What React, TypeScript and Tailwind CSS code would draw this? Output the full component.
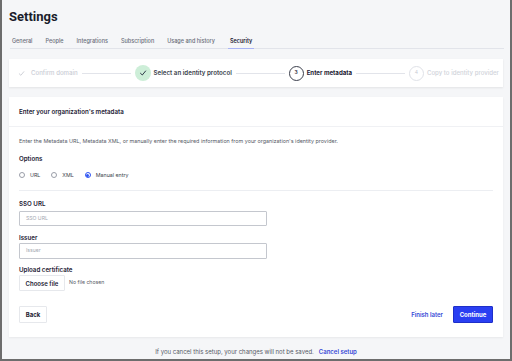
import React from 'react'

const Check = ({ className }: { className?: string }) => (
  <svg viewBox="0 0 10 10" className={className} fill="none" stroke="currentColor" strokeWidth="1" strokeLinecap="round" strokeLinejoin="round">
    <path d="M2.5 5.3 L4.3 7 L7.6 3" />
  </svg>
)

const Line = () => <div className="flex-1 h-px bg-[#e2e4ea] mx-[4px]" />

const Radio = ({ label, checked }: { label: string; checked?: boolean }) => (
  <label className="flex items-center gap-[5px]">
    {checked ? (
      <span className="w-[6px] h-[6px] rounded-full border border-[#2f55f3] bg-white flex items-center justify-center">
        <span className="w-[3px] h-[3px] rounded-full bg-[#2f55f3]" />
      </span>
    ) : (
      <span className="w-[6px] h-[6px] rounded-full border border-[#9a9ea8] bg-white" />
    )}
    <span className="text-[5.3px] leading-[8px] text-[#3b3f4c]">{label}</span>
  </label>
)

const App = () => {
  const tabs = ['General', 'People', 'Integrations', 'Subscription', 'Usage and history', 'Security']
  return (
    <div
      className="w-[512px] h-[361px] bg-[#f5f6f8] border-x-2 border-b-2 border-[#6d6d6d] overflow-hidden flex flex-col text-[#1c2033]"
      style={{ fontFamily: 'Inter, "Noto Sans", sans-serif' }}
    >
      <h1
        className="text-[13px] font-bold leading-none pl-[7px] pt-[10px] text-[#1a1d2b]"
        style={{ fontFamily: 'Roboto, sans-serif' }}
      >
        Settings
      </h1>

      <div className="ml-[8px] mr-[6px] mt-[14px] flex gap-[13px] border-b border-[#e2e4ea] pl-[2px]">
        {tabs.map((t) => (
          <div
            key={t}
            className={
              t === 'Security'
                ? 'text-[5.5px] leading-[8px] font-semibold text-[#1c2033] pb-[3px] border-b border-[#a9b4f5] -mb-px px-[2px]'
                : 'text-[5.5px] leading-[8px] font-medium text-[#6a6e7a] pb-[3px]'
            }
          >
            {t}
          </div>
        ))}
      </div>

      <div className="mx-[7px] mt-[10px] h-[28px] bg-white shadow-[0_1px_2px_rgba(0,0,0,0.08)] flex items-center pl-[8px] pr-[4px]">
        <Check className="w-[9px] h-[9px] text-[#c9ccd4]" />
        <span className="ml-[5px] text-[6.1px] font-medium text-[#c9ccd4]">Confirm domain</span>
        <Line />
        <span className="w-[16px] h-[16px] rounded-full bg-[#cdeed8] flex items-center justify-center">
          <Check className="w-[10px] h-[10px] text-[#2f3a4a]" />
        </span>
        <span className="ml-[3px] text-[6.2px] font-semibold text-[#3b3f4c]">Select an identity protocol</span>
        <Line />
        <span className="w-[15px] h-[15px] rounded-full border border-[#3b3f4c] flex items-center justify-center text-[5px] font-semibold">
          3
        </span>
        <span className="ml-[3px] text-[6.1px] font-bold text-[#1c2033]">Enter metadata</span>
        <Line />
        <span className="w-[15px] h-[15px] rounded-full border border-[#e0e2e8] flex items-center justify-center text-[5px] text-[#c9ccd4]">
          4
        </span>
        <span className="ml-[3px] text-[6.1px] font-medium text-[#d0d3da]">Copy to identity provider</span>
      </div>

      <div className="mx-[7px] mt-[10px] h-[240px] bg-white shadow-[0_1px_2px_rgba(0,0,0,0.06)] flex flex-col">
        <div className="h-[30px] shrink-0 border-b border-[#f0f1f4] flex items-center px-[10px]">
          <span className="text-[6.2px] font-semibold text-[#1c2033]">Enter your organization's metadata</span>
        </div>
        <div className="px-[10px] flex flex-col flex-1">
          <p className="mt-[10px] text-[5.4px] leading-[8px] text-[#555a66]">
            Enter the Metadata URL, Metadata XML, or manually enter the required information from your organization's identity provider.
          </p>
          <p className="mt-[9px] text-[6.2px] leading-[9px] font-semibold text-[#1c2033]">Options</p>
          <div className="mt-[8px] h-[8px] flex items-center gap-[11px]">
            <Radio label="URL" />
            <Radio label="XML" />
            <Radio label="Manual entry" checked />
          </div>
          <div className="mt-[11px] h-px bg-[#eceef2]" />

          <p className="mt-[8px] text-[6.2px] leading-[9px] font-semibold text-[#1c2033]">SSO URL</p>
          <div className="mt-[3px] w-[248px] h-[15px] border border-[#c4c7ce] rounded-[1px] flex items-center px-[6px] text-[5.1px] text-[#a3a7b0]">
            SSO URL
          </div>
          <p className="mt-[7px] text-[6.2px] leading-[9px] font-semibold text-[#1c2033]">Issuer</p>
          <div className="mt-[1px] w-[248px] h-[16px] border border-[#c4c7ce] rounded-[1px] flex items-center px-[6px] text-[5.1px] text-[#a3a7b0]">
            Issuer
          </div>
          <p className="mt-[6px] text-[6.2px] leading-[9px] font-semibold text-[#1c2033]">Upload certificate</p>
          <div className="mt-[1px] flex items-center gap-[4px]">
            <div className="w-[46px] h-[16px] border border-[#e6e8ec] rounded-[1px] flex items-center justify-center text-[6px] font-semibold text-[#1c2033]">
              Choose file
            </div>
            <span className="text-[5.2px] text-[#555a66]">No file chosen</span>
          </div>

          <div className="mt-[15px] flex items-center">
            <div className="w-[28px] h-[17px] border border-[#e6e8ec] rounded-[1px] flex items-center justify-center text-[6px] font-bold text-[#1c2033]">
              Back
            </div>
            <div className="flex-1" />
            <span className="text-[6px] font-semibold text-[#3548d6] mr-[10px]">Finish later</span>
            <div className="w-[40px] h-[17px] bg-[#2a3ff2] border border-[#1e2fc9] rounded-[1px] flex items-center justify-center text-[6px] font-bold text-white">
              Continue
            </div>
          </div>
        </div>
      </div>

      <div className="mt-[10px] flex justify-center gap-[5px] text-[6px] leading-[9px]">
        <span className="text-[#555a66]">If you cancel this setup, your changes will not be saved.</span>
        <span className="font-semibold text-[#3548d6]">Cancel setup</span>
      </div>
    </div>
  )
}

export default App
